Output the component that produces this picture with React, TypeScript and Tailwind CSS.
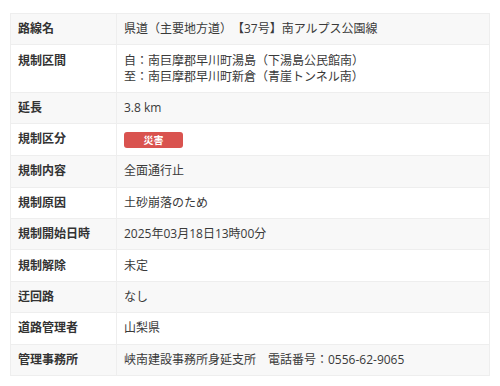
const rows: { label: string; value: React.ReactNode }[] = [
  { label: '路線名', value: '県道（主要地方道）【37号】南アルプス公園線' },
  {
    label: '規制区間',
    value: (
      <>
        自：南巨摩郡早川町湯島（下湯島公民館南）
        <br />
        至：南巨摩郡早川町新倉（青崖トンネル南）
      </>
    ),
  },
  { label: '延長', value: '3.8 km' },
  {
    label: '規制区分',
    value: (
      <span className="inline-flex h-[16px] w-[59px] items-center justify-center rounded-[3px] bg-[#d9534f] align-middle text-[10px] font-bold leading-none text-white">
        災害
      </span>
    ),
  },
  { label: '規制内容', value: '全面通行止' },
  { label: '規制原因', value: '土砂崩落のため' },
  { label: '規制開始日時', value: '2025年03月18日13時00分' },
  { label: '規制解除', value: '未定' },
  { label: '迂回路', value: 'なし' },
  { label: '道路管理者', value: '山梨県' },
  { label: '管理事務所', value: '峡南建設事務所身延支所　電話番号：0556-62-9065' },
]

export default function App() {
  return (
    <div
      className="h-[386px] w-[500px] bg-white px-[10px] pt-[13px] text-[12px] text-[#3a3a3a] [text-spacing-trim:space-all]"
      style={{ fontFamily: '"Open Sans", "Noto Sans CJK JP", sans-serif' }}
    >
      <table className="w-[480px] border-collapse border border-[#eeeeee]">
        <tbody>
          {rows.map((row, i) => (
            <tr key={row.label} className={i % 2 === 0 ? 'bg-[#f8f8f8]' : 'bg-white'}>
              <th className="w-[106px] border border-[#eeeeee] px-[7px] py-[7.2px] text-left align-top font-bold leading-[16px] text-[#333]">
                {row.label}
              </th>
              <td className="border border-[#eeeeee] px-[7px] py-[7.2px] leading-[16px]">{row.value}</td>
            </tr>
          ))}
        </tbody>
      </table>
    </div>
  )
}
